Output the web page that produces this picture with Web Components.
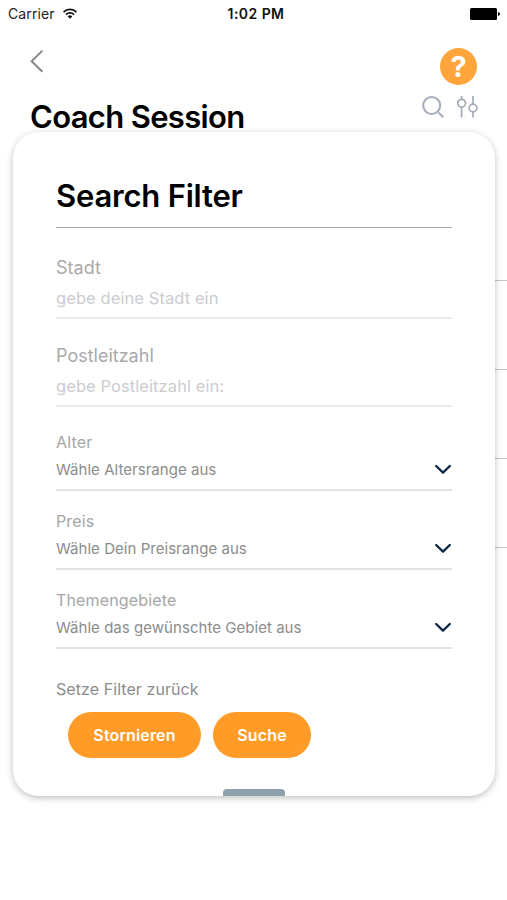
<!DOCTYPE html>
<html lang="de">
<head>
<meta charset="UTF-8">
<meta name="viewport" content="width=device-width, initial-scale=1">
<title>Coach Session</title>
<style>
    body {
        margin: 0;
        background: #fff;
        font-family: Inter, "Liberation Sans", sans-serif;
    }
</style>
</head>
<body>
<coach-screen>
    <status-bar slot="status" carrier="Carrier" time="1:02 PM"></status-bar>
    <page-header slot="header" heading="Coach Session"></page-header>
    <filter-card heading="Search Filter">
        <text-field label="Stadt" placeholder="gebe deine Stadt ein"></text-field>
        <text-field label="Postleitzahl" placeholder="gebe Postleitzahl ein:"></text-field>
        <select-field class="first" label="Alter" value="Wähle Altersrange aus"></select-field>
        <select-field label="Preis" value="Wähle Dein Preisrange aus"></select-field>
        <select-field label="Themengebiete" value="Wähle das gewünschte Gebiet aus"></select-field>
        <span slot="reset">Setze Filter zurück</span>
        <pill-button slot="actions" style="--w: 133px">Stornieren</pill-button>
        <pill-button slot="actions" style="--w: 98px">Suche</pill-button>
    </filter-card>
</coach-screen>

<script>
/** Attaches an open shadow root filled with the given styles and markup. */
function shadow(host, css, html) {
    host.attachShadow({ mode: 'open' }).innerHTML = `<style>${css}</style>${html}`;
}

class CoachScreen extends HTMLElement {
    connectedCallback() {
        shadow(this, /* css */`
            :host {
                display: flex;
                flex-direction: column;
                position: relative;
                height: 900px;
                overflow: hidden;
                background: #fff;
            }

            .list {
                display: flex;
                flex-direction: column;
                padding: 58px 0 0 30px;
            }

            .row {
                box-sizing: border-box;
                height: 89px;
                border-bottom: 1px solid #c6c6c6;
            }

            /* the filter sheet lies over the session list */
            .sheet {
                position: absolute;
                top: 132px;
                left: 13px;
                width: 482px;
                height: 664px;
            }
        `, `
            <slot name="status"></slot>
            <slot name="header"></slot>
            <div class="list">
                <div class="row"></div>
                <div class="row"></div>
                <div class="row"></div>
                <div class="row"></div>
            </div>
            <div class="sheet"><slot></slot></div>
        `);
    }
}

class StatusBar extends HTMLElement {
    connectedCallback() {
        shadow(this, /* css */`
            :host {
                display: grid;
                grid-template-columns: 1fr auto 1fr;
                align-items: center;
                box-sizing: border-box;
                height: 28px;
                padding: 0 7px 0 8px;
                color: #222;
                font-size: 14px;
                line-height: 28px;
            }

            .left {
                display: flex;
                align-items: center;
                gap: 7px;
                letter-spacing: 0.1px;
            }

            .time {
                font-weight: 600;
                color: #111;
                letter-spacing: 0.45px;
                padding-left: 4px;
            }

            .battery {
                justify-self: end;
            }

            svg {
                display: block;
            }
        `, `
            <div class="left">
                <span>${this.getAttribute('carrier')}</span>
                <svg width="16" height="12" viewBox="0 0 16 13" fill="none" stroke="#111" stroke-width="1.9">
                    <path d="M1 4.4a10 10 0 0 1 14 0"/>
                    <path d="M3.6 7.1a6.3 6.3 0 0 1 8.8 0"/>
                    <path d="M8 11.6 5.5 9.1a3.5 3.5 0 0 1 5 0z" fill="#111" stroke="none"/>
                </svg>
            </div>
            <span class="time">${this.getAttribute('time')}</span>
            <svg class="battery" width="30" height="12" viewBox="0 0 30 12">
                <rect width="27" height="12" rx="1.5"/>
                <path d="M28 4q2 .6 2 2t-2 2z"/>
            </svg>
        `);
    }
}

class PageHeader extends HTMLElement {
    connectedCallback() {
        shadow(this, /* css */`
            :host {
                display: flex;
                justify-content: space-between;
                box-sizing: border-box;
                height: 106px;
                padding: 20px 28px 0 30px;
            }

            .title {
                display: flex;
                flex-direction: column;
                padding-top: 1px;
            }

            h1 {
                margin: 24px 0 0;
                font-size: 31px;
                line-height: 40px;
                font-weight: 600;
                letter-spacing: -0.67px;
                white-space: nowrap;
                color: #000;
            }

            .tools {
                display: flex;
                flex-direction: column;
                align-items: flex-end;
                gap: 11px;
            }

            .help {
                display: grid;
                place-items: center;
                width: 37px;
                height: 37px;
                border-radius: 50%;
                background: #ffa53b;
                color: #fff;
                font-size: 29px;
                font-weight: 700;
                line-height: 37px;
                margin-right: 2px;
            }

            .icons {
                display: flex;
                gap: 12px;
            }

            svg {
                display: block;
                flex: none;
            }
        `, `
            <div class="title">
                <svg width="14" height="24" viewBox="0 0 14 24" fill="none" stroke="#858585" stroke-width="1.9">
                    <path d="M12.4 1.6 1.6 12.2l10.8 10.6"/>
                </svg>
                <h1>${this.getAttribute('heading')}</h1>
            </div>
            <div class="tools">
                <div class="help">?</div>
                <div class="icons">
                    <svg width="23" height="23" viewBox="0 0 23 23" fill="none" stroke="#a4abb9" stroke-width="2">
                        <circle cx="9.7" cy="9.5" r="8.5"/>
                        <path d="m16.5 16.5 4.7 4.7"/>
                    </svg>
                    <svg width="22" height="23" viewBox="0 0 22 23" fill="none" stroke="#a4abb9" stroke-width="1.7">
                        <path d="M4.6 0v3.4M4.6 11v10.5M16 0v8M16 16v5.5"/>
                        <circle cx="4.6" cy="7.2" r="3.9"/>
                        <circle cx="16" cy="12" r="3.9"/>
                    </svg>
                </div>
            </div>
        `);
    }
}

class FilterCard extends HTMLElement {
    connectedCallback() {
        shadow(this, /* css */`
            :host {
                display: flex;
                flex-direction: column;
                box-sizing: border-box;
                height: 100%;
                padding: 44px 43px 0;
                border-radius: 26px;
                background: #fff;
                box-shadow: 0 2px 7px rgba(0, 0, 0, 0.25);
            }

            h2 {
                margin: 0 0 3px;
                padding-bottom: 11px;
                border-bottom: 1px solid #a2a7b0;
                font-size: 31px;
                line-height: 40px;
                font-weight: 600;
                letter-spacing: -0.2px;
                color: #000;
            }

            ::slotted(.first) {
                margin-top: 5px;
            }

            .reset {
                margin-top: 29px;
                font-size: 16px;
                line-height: 22px;
                letter-spacing: 0.07px;
                color: #8c8c8c;
            }

            .actions {
                display: flex;
                gap: 12px;
                padding: 12px 0 0 12px;
            }

            .handle {
                align-self: center;
                width: 62px;
                height: 7px;
                margin-top: auto;
                border-radius: 4px 4px 0 0;
                background: #8fa1ab;
            }
        `, `
            <h2>${this.getAttribute('heading')}</h2>
            <slot></slot>
            <div class="reset"><slot name="reset"></slot></div>
            <div class="actions"><slot name="actions"></slot></div>
            <div class="handle"></div>
        `);
    }
}

class TextField extends HTMLElement {
    connectedCallback() {
        shadow(this, /* css */`
            :host {
                display: flex;
                flex-direction: column;
                gap: 7px;
                padding: 25px 0 8px;
                border-bottom: 2px solid #ebebeb;
            }

            .label {
                font-size: 18px;
                line-height: 24px;
                color: #a9a9a9;
            }

            .placeholder {
                font-size: 16.5px;
                line-height: 22px;
                letter-spacing: 0.08px;
                color: #cbcbcf;
            }
        `, `
            <div class="label">${this.getAttribute('label')}</div>
            <div class="placeholder">${this.getAttribute('placeholder')}</div>
        `);
    }
}

class SelectField extends HTMLElement {
    connectedCallback() {
        shadow(this, /* css */`
            :host {
                display: flex;
                flex-direction: column;
                gap: 6px;
                padding: 19px 0 10px;
                border-bottom: 2px solid #e2e2e2;
            }

            .label {
                font-size: 16px;
                line-height: 22px;
                letter-spacing: 0.15px;
                color: #a6a6a6;
            }

            .value {
                display: flex;
                align-items: center;
                justify-content: space-between;
                height: 20px;
                font-size: 15px;
                line-height: 20px;
                letter-spacing: 0.04px;
                color: #8c8c8c;
            }

            .value span {
                padding-top: 2px;
            }
        `, `
            <div class="label">${this.getAttribute('label')}</div>
            <div class="value">
                <span>${this.getAttribute('value')}</span>
                <svg width="18" height="11" viewBox="0 0 18 11" fill="none" stroke="#0b2545" stroke-width="2.3" stroke-linecap="round" stroke-linejoin="round">
                    <path d="M2.2 2 9 8.6 15.8 2"/>
                </svg>
            </div>
        `);
    }
}

class PillButton extends HTMLElement {
    connectedCallback() {
        shadow(this, /* css */`
            :host {
                display: block;
            }

            button {
                display: block;
                width: var(--w);
                height: 46px;
                padding: 0;
                border: 0;
                border-radius: 23px;
                background: #ff9b26;
                color: #fff;
                font: 600 16px/46px Inter, "Liberation Sans", sans-serif;
                letter-spacing: 0.15px;
            }
        `, `<button type="button"><slot></slot></button>`);
    }
}

customElements.define('status-bar', StatusBar);
customElements.define('page-header', PageHeader);
customElements.define('text-field', TextField);
customElements.define('select-field', SelectField);
customElements.define('pill-button', PillButton);
customElements.define('filter-card', FilterCard);
customElements.define('coach-screen', CoachScreen);
</script>
</body>
</html>
